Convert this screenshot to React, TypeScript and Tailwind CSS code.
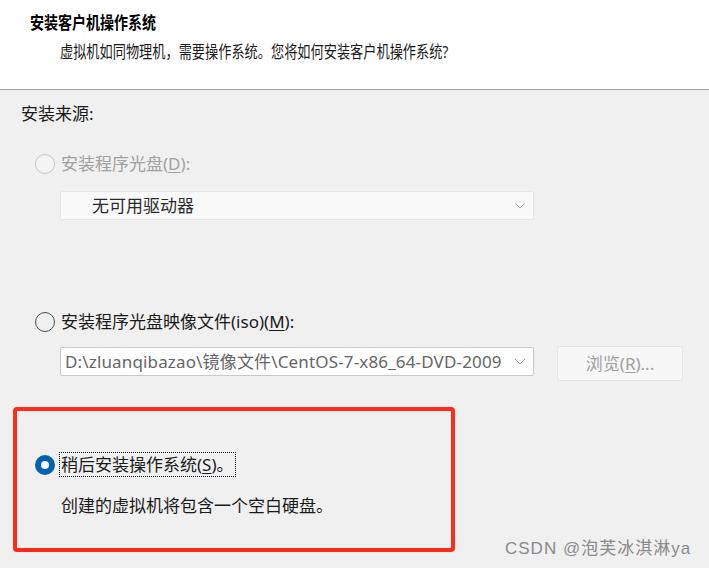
import React from 'react'

const font = "font-['Noto_Sans','Noto_Sans_CJK_SC',sans-serif]"

function Radio({ state }: { state: 'disabled' | 'off' | 'on' }) {
  if (state === 'on') {
    return <span className="block w-[20px] h-[20px] shrink-0 rounded-full border-[6px] border-[#0063b1] bg-white" />
  }
  return (
    <span
      className={
        state === 'disabled'
          ? 'block w-[20px] h-[20px] shrink-0 rounded-full border border-[#c6c6c6] bg-[#f4f4f4]'
          : 'block w-[20px] h-[20px] shrink-0 rounded-full border border-[#4a4a4a] bg-[#f0f0f0]'
      }
    />
  )
}

function Chevron() {
  return (
    <svg width="12" height="7" viewBox="0 0 12 7" className="shrink-0">
      <path d="M1 1l5 5 5-5" fill="none" stroke="#a6a6a6" strokeWidth="1" />
    </svg>
  )
}

export default function App() {
  return (
    <div className={`relative w-[709px] h-[568px] overflow-hidden bg-[#f0f0f0] ${font}`}>
      {/* Header */}
      <div className="h-[90px] bg-white border-b border-[#a0a0a0]">
        <div className="pl-[30px] pt-[13px] text-[14px] leading-[20px] font-bold text-black">
          <span className="inline-block scale-y-[1.2]">安装客户机操作系统</span>
        </div>
        <div className="pl-[60px] mt-[9px] text-[13.2px] leading-[20px] text-[#1a1a1a]">
          <span className="inline-block scale-y-[1.25]">
            虚拟机如同物理机，需要操作系统。您将如何安装客户机操作系统?
          </span>
        </div>
      </div>

      {/* Body */}
      <div className="text-[17px] leading-[24px] text-[#1a1a1a]">
        <div className="ml-[21px] mt-[12px]">安装来源:</div>

        <div className="ml-[35px] mt-[26px] flex items-center gap-[6px] h-[24px]">
          <Radio state="disabled" />
          <span className="text-[#a0a0a0]">
            安装程序光盘(<span className="underline underline-offset-2">D</span>):
          </span>
        </div>

        <div className="ml-[60px] mt-[15px] w-[474px] h-[29px] flex items-center justify-between pl-[31px] pr-[7px] bg-[#f9f9f9] border border-[#e6e6e6] rounded-[2px] text-[#2a2a2a]">
          <span>无可用驱动器</span>
          <Chevron />
        </div>

        <div className="ml-[35px] mt-[90px] flex items-center gap-[6px] h-[24px]">
          <Radio state="off" />
          <span>
            安装程序光盘映像文件(iso)(<span className="underline underline-offset-2">M</span>):
          </span>
        </div>

        <div className="ml-[60px] mt-[12px] flex items-start gap-[23px]">
          <div className="mt-[1px] w-[474px] h-[29px] flex items-center bg-white border border-[#c8c8c8] rounded-[2px] pl-[4px] pr-[7px]">
            <span className="w-[441px] shrink-0 overflow-hidden whitespace-nowrap text-[#666666] tracking-[0.15px]">
              D:\zluanqibazao\镜像文件\CentOS-7-x86_64-DVD-2009
            </span>
            <span className="ml-auto">
              <Chevron />
            </span>
          </div>
          <div className="w-[126px] h-[35px] flex items-center justify-center bg-[#f7f7f7] border border-[#e4e4e4] rounded-[3px] text-[#a0a0a0]">
            浏览(<span className="underline underline-offset-2">R</span>)...
          </div>
        </div>

        {/* Annotation box */}
        <div className="ml-[13px] mt-[26px] w-[442px] h-[145px] border-[4px] border-[#ff2a1a] rounded-[4px]">
          <div className="ml-[18px] mt-[41px] flex items-center gap-[4px]">
            <Radio state="on" />
            <span className="h-[25px] flex items-center px-[1px] border border-dotted border-black leading-[23px]">
              稍后安装操作系统(<span className="underline underline-offset-2">S</span>)。
            </span>
          </div>
          <div className="ml-[44px] mt-[17px]">创建的虚拟机将包含一个空白硬盘。</div>
        </div>
      </div>

      {/* Watermark */}
      <div className="absolute left-[505px] top-[537px] text-[17px] leading-[24px] tracking-[1px] text-[#8a8a8a] font-['Liberation_Sans','Noto_Sans_CJK_SC',sans-serif] whitespace-nowrap">
        CSDN @泡芙冰淇淋ya
      </div>
    </div>
  )
}
